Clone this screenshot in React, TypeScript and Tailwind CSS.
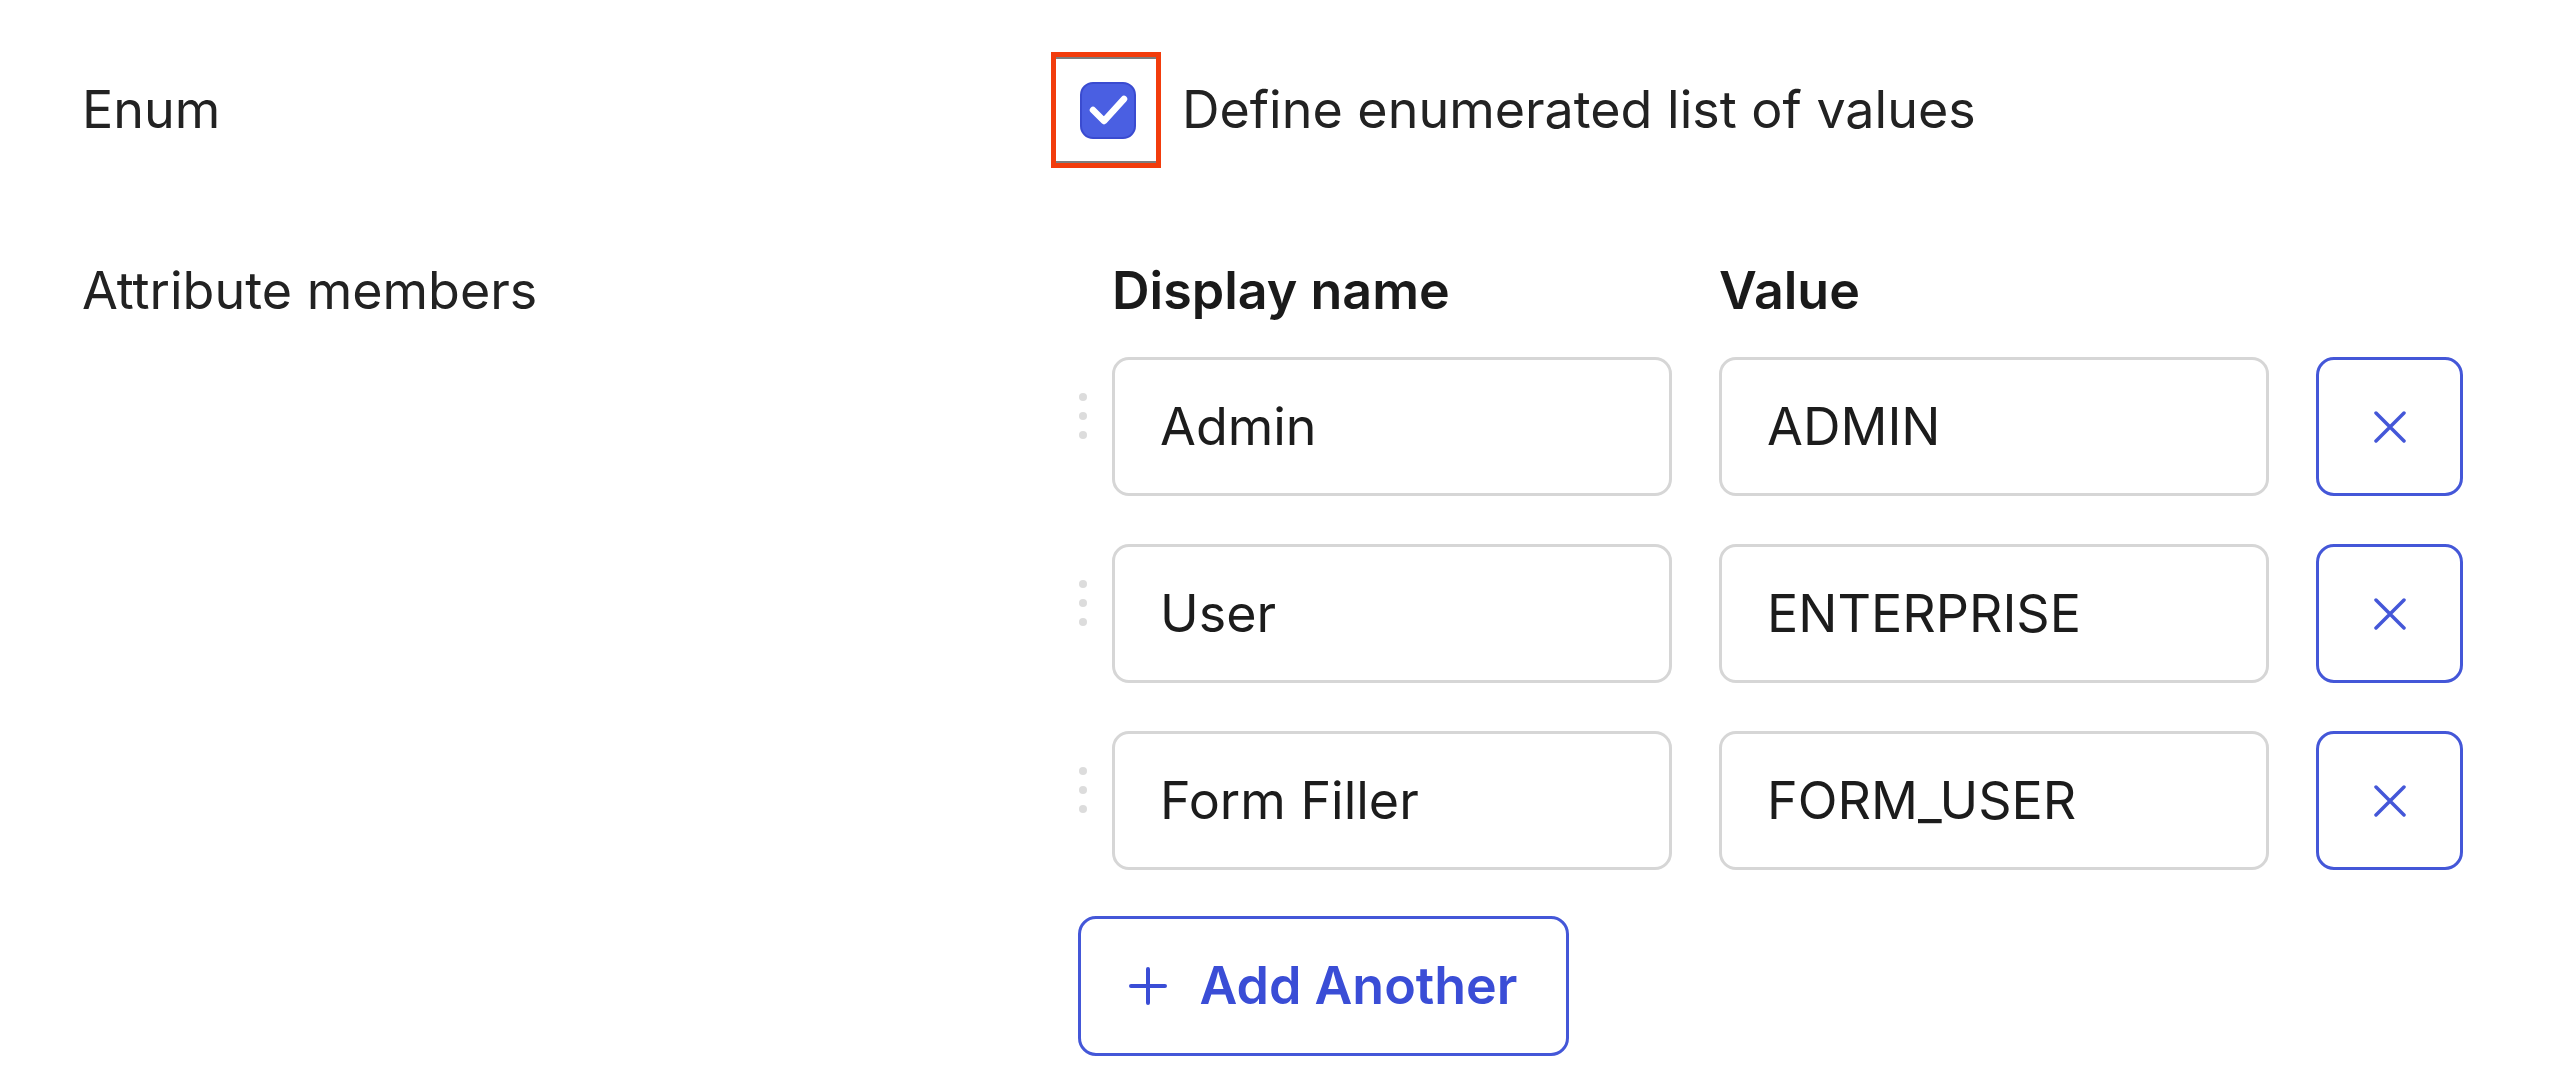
import { Fragment } from "react";

const members = [
  { name: "Admin", value: "ADMIN" },
  { name: "User", value: "ENTERPRISE" },
  { name: "Form Filler", value: "FORM_USER" },
];

const DragHandle = () => (
  <div className="flex w-[61px] flex-col gap-[11px] self-start pl-[28px] pt-[36px]">
    <span className="h-[8px] w-[8px] rounded-full bg-[#dcdcdc]" />
    <span className="h-[8px] w-[8px] rounded-full bg-[#dcdcdc]" />
    <span className="h-[8px] w-[8px] rounded-full bg-[#dcdcdc]" />
  </div>
);

const CloseIcon = () => (
  <svg width="32" height="32" viewBox="0 0 32 32" fill="none">
    <path d="M2 2 L30 30 M30 2 L2 30" stroke="#4457d8" strokeWidth="3.5" strokeLinecap="round" />
  </svg>
);

const PlusIcon = () => (
  <svg width="38" height="38" viewBox="0 0 38 38" fill="none">
    <path d="M19 2 V36 M2 19 H36" stroke="#3a4dd6" strokeWidth="4" strokeLinecap="round" />
  </svg>
);

const App = () => {
  return (
    <div className="min-h-screen bg-white pl-[82px] pt-[52px] font-['Inter',sans-serif] text-[52px] text-[#222]">
      <div className="grid grid-cols-[969px_1fr]">
        {/* enum row */}
        <div className="flex h-[116px] items-center">Enum</div>
        <div className="flex h-[116px] items-center">
          <div className="flex h-[116px] w-[110px] border-[5px] border-[#f23c0c]">
            <div className="flex w-full items-center justify-center border-y-2 border-[#7d7d7d] pl-[4px]">
              <div className="flex h-[57px] w-[56px] items-center justify-center rounded-[13px] border-2 border-[#3a4bd0] bg-[#4a5fe2]">
                <svg width="40" height="32" viewBox="0 0 40 32" fill="none">
                  <path d="M5 16 L16 27 L36 5" stroke="white" strokeWidth="6.5" strokeLinecap="round" strokeLinejoin="round" />
                </svg>
              </div>
            </div>
          </div>
          <span className="ml-[21px] leading-none">Define enumerated list of values</span>
        </div>

        {/* members row */}
        <div className="mt-[91px] h-[64px] leading-[64px]">Attribute members</div>
        <div className="mt-[91px] flex flex-col">
          <div className="flex h-[64px] items-center pl-[61px] font-semibold leading-[64px] text-[#1a1a1a]">
            <span className="w-[607px]">Display name</span>
            <span>Value</span>
          </div>
          <div className="mt-[34px] flex flex-col gap-[48px]">
            {members.map((m) => (
              <Fragment key={m.value}>
                <div className="flex items-center">
                  <DragHandle />
                  <div className="flex h-[139px] w-[560px] items-center rounded-[17px] border-[3px] border-[#d6d6d6] pl-[45px] text-[#1c1c1c]">
                    {m.name}
                  </div>
                  <div className="ml-[47px] flex h-[139px] w-[550px] items-center rounded-[17px] border-[3px] border-[#d6d6d6] pl-[45px] text-[#1c1c1c]">
                    {m.value}
                  </div>
                  <button className="ml-[47px] flex h-[139px] w-[147px] items-center justify-center rounded-[18px] border-[3px] border-[#4457d8] bg-white">
                    <CloseIcon />
                  </button>
                </div>
              </Fragment>
            ))}
          </div>
          <button className="ml-[27px] mt-[46px] flex h-[140px] w-[491px] items-center justify-center gap-[32px] rounded-[18px] border-[3px] border-[#4457d8] bg-white font-semibold text-[#3a4dd6]">
            <PlusIcon />
            <span>Add Another</span>
          </button>
        </div>
      </div>
    </div>
  );
};

export default App;
